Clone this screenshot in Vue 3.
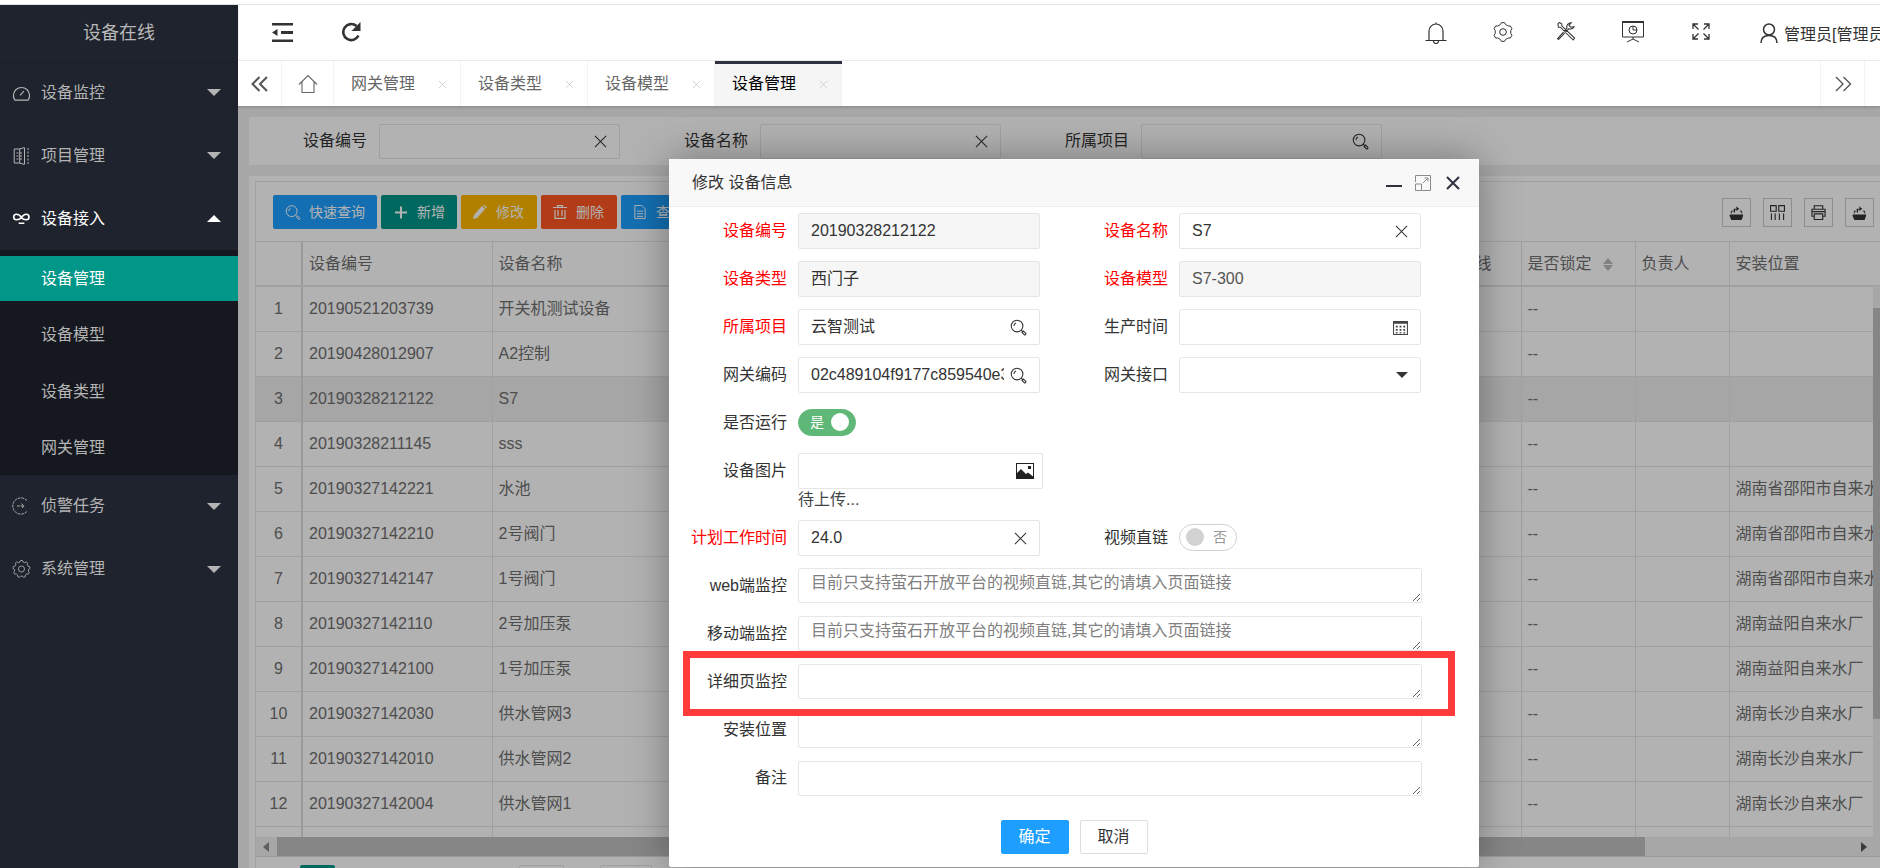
<template>
  <div class="app">
    <!-- icon sprite -->
    <svg class="defs" aria-hidden="true">
      <symbol id="i-search" viewBox="0 0 24 24"><g fill="none" stroke="currentColor" stroke-width="1.5"><circle cx="10" cy="10" r="8.2"/><path d="M5.500 10a4.500 4.500 0 0 1 3-4.200M15.800 15.800l1.700 1.700M17 19l2-2 3 3a1.400 1.400 0 0 1-2 2z"/></g></symbol>
      <symbol id="i-close" viewBox="0 0 14 14"><path d="M1 1l12 12M13 1L1 13" fill="none" stroke="currentColor" stroke-width="1.1"/></symbol>
      <symbol id="i-shut" viewBox="0 0 14 14"><path d="M1 1l12 12M13 1L1 13" fill="none" stroke="currentColor" stroke-width="2"/></symbol>
      <symbol id="i-home" viewBox="0 0 20 20"><path d="M1 10.500L10 1.500l9 9M4 8v10.500h12V8" fill="none" stroke="currentColor" stroke-width="1.100"/></symbol>
      <symbol id="i-left" viewBox="0 0 18 16"><path d="M8.500 1L1.500 8l7 7M16 1L9 8l7 7" fill="none" stroke="currentColor" stroke-width="2"/></symbol>
      <symbol id="i-right" viewBox="0 0 18 16"><path d="M2 1l7 7-7 7M9.500 1l7 7-7 7" fill="none" stroke="currentColor" stroke-width="1.400"/></symbol>
      <symbol id="i-outdent" viewBox="0 0 21 19"><path fill="currentColor" d="M0 0h21v2.500H0zM0 16.500h21V19H0zM9 8h12v3H9zM0 9.500l5.500-3.500v7z"/></symbol>
      <symbol id="i-refresh" viewBox="0 0 20 20"><path d="M17.500 13.500A8 8 0 1 1 15.500 4" fill="none" stroke="currentColor" stroke-width="2.600"/><path fill="currentColor" d="M19.500 0v9h-9z"/></symbol>
      <symbol id="i-bell" viewBox="0 0 22 22"><path d="M4 18V9a7 7 0 0 1 14 0v9M0.500 18.500h21M8.500 19a2.500 2.500 0 0 0 5 0M11 2V.500" fill="none" stroke="currentColor" stroke-width="1.200"/></symbol>
      <symbol id="i-gear6" viewBox="0 0 24 24"><path :d="gear(6, 12, 9.5)" fill="none" stroke="currentColor" stroke-width="1.200"/><circle cx="12" cy="12" r="4" fill="none" stroke="currentColor" stroke-width="1.200"/></symbol>
      <symbol id="i-gear" viewBox="0 0 24 24"><path :d="gear(9, 12, 9.500)" fill="none" stroke="currentColor" stroke-width="1.100"/><circle cx="12" cy="12" r="4" fill="none" stroke="currentColor" stroke-width="1.100"/></symbol>
      <symbol id="i-tools" viewBox="0 0 20 20"><path d="M1 2l1.500-1.500L5 2v2l13.500 13-1.500 2L3.500 5.500H1.500zM18 5a4.500 4.500 0 0 1-5.500 2L3 17l-1.500 1.500L.700 17.500 10.500 6.500A4.500 4.500 0 0 1 15 .700L12.500 3.500l2 2z" fill="none" stroke="currentColor" stroke-width="1.100"/></symbol>
      <symbol id="i-screen" viewBox="0 0 22 22"><path fill="currentColor" d="M0 0h22v2H0z"/><path d="M.500 1v15h21V1M11 16v2M5 21l6-3 6 3" fill="none" stroke="currentColor"/><circle cx="11" cy="9" r="4" fill="none" stroke="currentColor"/><path d="M11 5v4h4" fill="none" stroke="currentColor"/></symbol>
      <symbol id="i-expand" viewBox="0 0 18 17"><path d="M1 6V1h5M1 1l5.500 5.500M12 1h5v5M17 1l-5.500 5.500M1 11v5h5M1 16l5.500-5.500M12 16h5v-5M17 16l-5.500-5.500" fill="none" stroke="currentColor" stroke-width="1.300"/></symbol>
      <symbol id="i-user" viewBox="0 0 18 20"><path d="M1 20c0-5 3-7.500 8-7.500s8 2.500 8 7.500" fill="none" stroke="currentColor" stroke-width="1.500"/><circle cx="9" cy="6.500" r="5.500" fill="none" stroke="currentColor" stroke-width="1.500"/></symbol>
      <symbol id="i-gauge" viewBox="0 0 20 18"><path d="M3 16.500a8.500 8.500 0 1 1 14 0zM8.500 11.500L12.500 7" fill="none" stroke="currentColor" stroke-width="1.200"/></symbol>
      <symbol id="i-book" viewBox="0 0 16 18"><path d="M.700 2h5.500v14H.700zM6 2l5-1.500M6 16l5 1.500M11 1v16" fill="none" stroke="currentColor"/><path d="M14.500 1v16M3 6h6M3 9h6M3 12h6" fill="none" stroke="currentColor" stroke-dasharray="2 1.500"/></symbol>
      <symbol id="i-link" viewBox="-1 -3 20 18"><path d="M9 4.500C7.500 2 5.500 1 3.700 1a2.800 2.800 0 0 0 0 5.800C5.500 6.800 7.500 6 9 4.500c1.500-2.500 3-3.500 5-3.500a2.800 2.800 0 0 1 0 5.800C12 6.800 10 6 9 4.500zM6 10.500h6" fill="none" stroke="currentColor" stroke-width="1.700"/></symbol>
      <symbol id="i-task" viewBox="0 0 20 20"><path d="M16 4A9 9 0 1 0 16 16M5 10h8M10 7.500L13 10l-3 2.500" fill="none" stroke="currentColor" stroke-width="1.100" stroke-dasharray="3 1"/></symbol>
      <symbol id="i-plus" viewBox="0 0 12 12"><path fill="currentColor" d="M5 0h2v5h5v2H7v5H5V7H0V5h5z"/></symbol>
      <symbol id="i-pencil" viewBox="0 0 14 14"><path fill="currentColor" d="M0 14l1-4 8-9 3 3-8 9zM10 0l1-.5 3 3-1 1z"/></symbol>
      <symbol id="i-trash" viewBox="0 0 14 14"><path d="M0 2.500h14M4.500 2V.700h5V2M2 5v8.300h10V5M5 5v6M9 5v6" fill="none" stroke="currentColor" stroke-width="1.200"/></symbol>
      <symbol id="i-doc" viewBox="0 0 13 16"><path d="M.600.600h8l3.800 3.800v11H.600zM3 7h7M3 10h7M3 13h7" fill="none" stroke="currentColor" stroke-width="1.100"/></symbol>
      <symbol id="i-export" viewBox="0 0 16 16"><path fill="currentColor" d="M1 10h14v1.500L13.500 16h-11L.500 11.500zM7 1l4 3-3 2.500V5H6.500v3H5V4h3V3z"/><path d="M2.500 9V6.500h2M13.500 9V6.500h-2" fill="none" stroke="currentColor"/></symbol>
      <symbol id="i-cols" viewBox="0 0 16 16"><path d="M.600.600h6v6h-6zM9.400.600h6v6h-6zM1.500 9v7M5.500 9v7M10 9v7M14.500 9v7" fill="none" stroke="currentColor" stroke-width="1.200"/></symbol>
      <symbol id="i-print" viewBox="0 0 16 16"><path d="M3.500 4V.800h9V4M3.500 12H1V4.500h14V12h-2.500M3.500 9.500h9v6h-9zM1 7h14" fill="none" stroke="currentColor" stroke-width="1.200"/></symbol>
      <symbol id="i-date" viewBox="0 0 16 16"><path d="M.600 1.500h14.800v14H.600z" fill="none" stroke="currentColor" stroke-width="1.100"/><path fill="currentColor" d="M1 1h14v3H1zM3 6h2v2H3zM7 6h2v2H7zM11 6h2v2h-2zM3 9.500h2v2H3zM7 9.500h2v2H7zM11 9.500h2v2h-2zM3 13h2v1.500H3zM7 13h2v1.500H7zM11 13h2v1.500h-2z"/></symbol>
      <symbol id="i-image" viewBox="0 0 18 16"><path fill="currentColor" fill-rule="evenodd" d="M0 0h18v16H0zM1 1v9l4-4 5 5 2-1.500 5 4V1zM12 3h3v3h-3z"/></symbol>
      <symbol id="i-restore" viewBox="0 0 16 16"><path d="M.500 7V.500h15v15H7M9.500 3H13v3.500M13 3L8 8" fill="none" stroke="#8a8a8a" stroke-width="1"/><path d="M.500 9h6v6.500h-6z" fill="none" stroke="#8a8a8a" stroke-width="1"/></symbol>
    </svg>

    <div class="top-strip"></div>
    <div class="shell">
      <aside class="sidebar">
        <div class="logo">设备在线</div>
        <template v-for="m in menus" :key="m.label">
          <div class="menu-item" :class="{ open: m.children }">
            <svg class="menu-ico"><use :href="'#' + m.icon" /></svg>
            <span>{{ m.label }}</span>
            <i class="caret" :class="{ up: m.children }"></i>
          </div>
          <div v-if="m.children" class="submenu">
            <div v-for="(c, i) in m.children" :key="c" class="sub-item" :class="{ active: i === 0 }">{{ c }}</div>
          </div>
        </template>
      </aside>

      <div class="right">
        <header class="header">
          <svg class="h-outdent"><use href="#i-outdent" /></svg>
          <svg class="h-refresh"><use href="#i-refresh" /></svg>
          <div class="header-tools">
            <svg class="h-bell"><use href="#i-bell" /></svg>
            <svg class="h-gear"><use href="#i-gear6" /></svg>
            <svg class="h-tool"><use href="#i-tools" /></svg>
            <svg class="h-screen"><use href="#i-screen" /></svg>
            <svg class="h-expand"><use href="#i-expand" /></svg>
            <svg class="h-user"><use href="#i-user" /></svg>
            <span class="user-name">管理员[管理员]</span>
          </div>
        </header>

        <nav class="tabs">
          <div class="tab-arrow"><svg class="arrow-ico"><use href="#i-left" /></svg></div>
          <div class="tab-home"><svg class="home-ico"><use href="#i-home" /></svg></div>
          <div v-for="t in tabs" :key="t" class="tab" :class="{ current: t === '设备管理' }">
            <span>{{ t }}</span>
            <svg class="tab-x"><use href="#i-close" /></svg>
          </div>
          <div class="tab-arrow tab-next"><svg class="arrow-ico thin"><use href="#i-right" /></svg></div>
        </nav>

        <main class="main">
          <section class="search-card">
            <div class="search-field">
              <label>设备编号</label>
              <div class="search-input"><svg class="x-ico"><use href="#i-close" /></svg></div>
            </div>
            <div class="search-field">
              <label>设备名称</label>
              <div class="search-input"><svg class="x-ico"><use href="#i-close" /></svg></div>
            </div>
            <div class="search-field">
              <label>所属项目</label>
              <div class="search-input"><svg class="s-ico"><use href="#i-search" /></svg></div>
            </div>
          </section>

          <section class="table-card">
            <div class="panel">
              <div class="toolbar">
                <div class="btn-group">
                  <button class="btn blue"><svg class="b-search"><use href="#i-search" /></svg>快速查询</button>
                  <button class="btn teal"><svg class="b-plus"><use href="#i-plus" /></svg>新增</button>
                  <button class="btn amber"><svg class="b-small"><use href="#i-pencil" /></svg>修改</button>
                  <button class="btn red"><svg class="b-small"><use href="#i-trash" /></svg>删除</button>
                  <button class="btn blue"><svg class="b-small"><use href="#i-doc" /></svg>查看</button>
                </div>
                <div class="tool-group">
                  <div class="tool"><svg><use href="#i-export" /></svg></div>
                  <div class="tool"><svg><use href="#i-cols" /></svg></div>
                  <div class="tool"><svg><use href="#i-print" /></svg></div>
                  <div class="tool"><svg><use href="#i-export" /></svg></div>
                </div>
              </div>

              <div class="table-wrap">
                <table class="grid">
                  <colgroup>
                    <col v-for="(w, i) in colWidths" :key="i" :style="{ width: w + 'px' }" />
                  </colgroup>
                  <thead>
                    <tr>
                      <th></th>
                      <th v-for="h in heads" :key="h">
                        {{ h }}
                        <span v-if="h === '是否锁定'" class="sort"><i></i><i></i></span>
                      </th>
                    </tr>
                  </thead>
                  <tbody>
                    <tr v-for="(r, i) in rows" :key="i" :class="{ selected: r.no === 3 }">
                      <td class="no">{{ r.no }}</td>
                      <td>{{ r.code }}</td>
                      <td>{{ r.name }}</td>
                      <td></td><td></td><td></td><td></td><td></td>
                      <td>{{ r.no ? '--' : '' }}</td>
                      <td></td>
                      <td>{{ r.place }}</td>
                    </tr>
                  </tbody>
                </table>
                <div class="v-scroll"><div class="v-thumb"></div></div>
              </div>

              <div class="h-scroll">
                <div class="h-arrow"><i class="tri-left"></i></div>
                <div class="h-thumb"></div>
                <div class="h-rest"><i class="tri-right"></i></div>
              </div>

              <div class="pager">
                <div class="page-cur"></div>
                <div class="page-box first"></div>
                <div class="page-box second"></div>
              </div>
            </div>
          </section>

          <div class="shade"></div>

          <div class="modal">
            <div class="modal-head">
              <span>修改 设备信息</span>
              <div class="modal-actions">
                <i class="min"></i>
                <svg class="restore"><use href="#i-restore" /></svg>
                <svg class="shut"><use href="#i-shut" /></svg>
              </div>
            </div>

            <div class="modal-body">
              <div class="row">
                <div class="field">
                  <label class="req">设备编号</label>
                  <div class="inp off"><span>20190328212122</span></div>
                </div>
                <div class="field">
                  <label class="req">设备名称</label>
                  <div class="inp"><span>S7</span><svg class="x-ico"><use href="#i-close" /></svg></div>
                </div>
              </div>
              <div class="row">
                <div class="field">
                  <label class="req">设备类型</label>
                  <div class="inp off"><span>西门子</span></div>
                </div>
                <div class="field">
                  <label class="req">设备模型</label>
                  <div class="inp off muted"><span>S7-300</span></div>
                </div>
              </div>
              <div class="row">
                <div class="field">
                  <label class="req">所属项目</label>
                  <div class="inp"><span>云智测试</span><svg class="s-ico"><use href="#i-search" /></svg></div>
                </div>
                <div class="field">
                  <label>生产时间</label>
                  <div class="inp"><span></span><svg class="d-ico"><use href="#i-date" /></svg></div>
                </div>
              </div>
              <div class="row">
                <div class="field">
                  <label>网关编码</label>
                  <div class="inp"><span>02c489104f9177c859540e3a</span><svg class="s-ico"><use href="#i-search" /></svg></div>
                </div>
                <div class="field">
                  <label>网关接口</label>
                  <div class="inp"><span></span><i class="select-tri"></i></div>
                </div>
              </div>
              <div class="row">
                <div class="field">
                  <label>是否运行</label>
                  <div class="switch on"><em>是</em><i></i></div>
                </div>
              </div>
              <div class="row tight">
                <div class="field">
                  <label>设备图片</label>
                  <div class="inp wide"><span></span><svg class="i-ico"><use href="#i-image" /></svg></div>
                </div>
              </div>
              <div class="hint">待上传...</div>
              <div class="row">
                <div class="field">
                  <label class="req">计划工作时间</label>
                  <div class="inp"><span>24.0</span><svg class="x-ico"><use href="#i-close" /></svg></div>
                </div>
                <div class="field">
                  <label>视频直链</label>
                  <div class="switch"><i></i><em>否</em></div>
                </div>
              </div>
              <div v-for="a in areas" :key="a.label" class="row area">
                <div class="field">
                  <label>{{ a.label }}</label>
                  <textarea :placeholder="a.placeholder"></textarea>
                </div>
              </div>
            </div>

            <div class="modal-foot">
              <button class="ok">确定</button>
              <button class="cancel">取消</button>
            </div>

            <!-- annotation drawn on the screenshot -->
            <div class="mark"></div>
          </div>
        </main>
      </div>
    </div>
  </div>
</template>

<script setup>
const tip = '目前只支持萤石开放平台的视频直链,其它的请填入页面链接'

const menus = [
  { label: '设备监控', icon: 'i-gauge' },
  { label: '项目管理', icon: 'i-book' },
  { label: '设备接入', icon: 'i-link', children: ['设备管理', '设备模型', '设备类型', '网关管理'] },
  { label: '侦警任务', icon: 'i-task' },
  { label: '系统管理', icon: 'i-gear' }
]

const tabs = ['网关管理', '设备类型', '设备模型', '设备管理']

const colWidths = [46, 190, 180, 180, 180, 200, 189, 100, 114, 94, 151]
const heads = ['设备编号', '设备名称', '设备类型', '设备模型', '所属项目', '生产时间', '是否在线', '是否锁定', '负责人', '安装位置']

const rows = [
  { no: 1, code: '20190521203739', name: '开关机测试设备', place: '' },
  { no: 2, code: '20190428012907', name: 'A2控制', place: '' },
  { no: 3, code: '20190328212122', name: 'S7', place: '' },
  { no: 4, code: '20190328211145', name: 'sss', place: '' },
  { no: 5, code: '20190327142221', name: '水池', place: '湖南省邵阳市自来水厂' },
  { no: 6, code: '20190327142210', name: '2号阀门', place: '湖南省邵阳市自来水厂' },
  { no: 7, code: '20190327142147', name: '1号阀门', place: '湖南省邵阳市自来水厂' },
  { no: 8, code: '20190327142110', name: '2号加压泵', place: '湖南益阳自来水厂' },
  { no: 9, code: '20190327142100', name: '1号加压泵', place: '湖南益阳自来水厂' },
  { no: 10, code: '20190327142030', name: '供水管网3', place: '湖南长沙自来水厂' },
  { no: 11, code: '20190327142010', name: '供水管网2', place: '湖南长沙自来水厂' },
  { no: 12, code: '20190327142004', name: '供水管网1', place: '湖南长沙自来水厂' },
  { no: '', code: '', name: '', place: '' }
]

const areas = [
  { label: 'web端监控', placeholder: tip },
  { label: '移动端监控', placeholder: tip },
  { label: '详细页监控', placeholder: '' },
  { label: '安装位置', placeholder: '' },
  { label: '备注', placeholder: '' }
]

// outline of a cog wheel, centred on 12,12
function gear(teeth, outer, inner) {
  const step = (Math.PI * 2) / teeth
  let d = ''
  for (let i = 0; i < teeth; i++) {
    const a = i * step
    const pts = [
      [inner, a - step * 0.32],
      [outer - 0.6, a - step * 0.16],
      [outer - 0.6, a + step * 0.16],
      [inner, a + step * 0.32]
    ]
    pts.forEach(([r, t], j) => {
      const x = (12 + r * Math.sin(t)).toFixed(2)
      const y = (12 - r * Math.cos(t)).toFixed(2)
      d += (i === 0 && j === 0 ? 'M' : 'L') + x + ' ' + y
    })
  }
  return d + 'Z'
}
</script>

<style scoped>
.app {
  width: 1880px;
  height: 868px;
  overflow: hidden;
  display: flex;
  flex-direction: column;
  background: #fff;
  font: 16px/20px "Liberation Sans", "Noto Sans CJK SC", sans-serif;
  color: #333;
}
.defs {
  position: absolute;
  width: 0;
  height: 0;
}
.top-strip {
  height: 4px;
  flex: none;
  border-bottom: 1px solid #e2e2e2;
  box-sizing: content-box;
}
.shell {
  flex: 1;
  display: flex;
  min-height: 0;
}

/* 左侧菜单 */
.sidebar {
  width: 238px;
  flex: none;
  background: #1f232d;
  color: #b8b8b8;
}
.logo {
  height: 56px;
  line-height: 56px;
  text-align: center;
  font-size: 18px;
  box-shadow: 0 1px 2px rgba(0, 0, 0, 0.15);
}
.menu-item {
  height: 63px;
  display: flex;
  align-items: center;
  padding-left: 12px;
  position: relative;
  color: #b4b4b4;
}
.menu-item.open {
  color: #fff;
}
.menu-ico {
  width: 19px;
  height: 18px;
  margin-right: 10px;
  flex: none;
}
.caret {
  margin-left: auto;
  margin-right: 17px;
  width: 0;
  height: 0;
  border-left: 7px solid transparent;
  border-right: 7px solid transparent;
  border-top: 7px solid #b4b4b4;
}
.caret.up {
  border-top: 0;
  border-bottom: 7px solid #fff;
}
.submenu {
  background: #16181f;
  padding: 6px 0 5px;
}
.sub-item {
  height: 45px;
  line-height: 45px;
  padding-left: 41px;
  margin-bottom: 11.3px;
  color: #b4b4b4;
}
.sub-item:last-child {
  margin-bottom: 0;
}
.sub-item.active {
  background: #009688;
  color: #fff;
}

/* 顶栏 */
.right {
  flex: 1;
  min-width: 0;
  display: flex;
  flex-direction: column;
}
.header {
  height: 55px;
  flex: none;
  display: flex;
  align-items: center;
  border-bottom: 1px solid #f2f2f2;
  box-sizing: content-box;
  color: #333;
}
.h-outdent {
  width: 21px;
  height: 19px;
  margin-left: 34px;
  margin-top: -1px;
}
.h-refresh {
  width: 20px;
  height: 20px;
  margin-left: 48px;
  margin-top: -1px;
}
.header-tools {
  margin-left: auto;
  width: 455px;
  flex: none;
  display: flex;
  align-items: center;
  overflow: hidden;
  white-space: nowrap;
}
.header-tools svg {
  flex: none;
}
.h-bell {
  width: 22px;
  height: 22px;
}
.h-gear {
  width: 20px;
  height: 20px;
  margin-left: 46px;
  margin-top: -2px;
}
.h-tool {
  width: 19px;
  height: 19px;
  margin-left: 44px;
  margin-top: -2px;
}
.h-screen {
  width: 22px;
  height: 22px;
  margin-left: 46px;
  margin-top: -2px;
}
.h-expand {
  width: 18px;
  height: 17px;
  margin-left: 48px;
  margin-top: -3px;
}
.h-user {
  width: 18px;
  height: 20px;
  margin-left: 50px;
}
.user-name {
  margin-left: 6px;
  margin-top: 5px;
}

/* 标签页 */
.tabs {
  height: 45px;
  flex: none;
  display: flex;
  position: relative;
  z-index: 2;
  box-shadow: 0 1px 3px rgba(0, 0, 0, 0.2);
  background: #fff;
}
.tab-arrow {
  width: 44px;
  box-sizing: border-box;
  display: flex;
  align-items: center;
  justify-content: center;
  border-right: 1px solid #f2f2f2;
  color: #555;
}
.tab-next {
  position: absolute;
  right: 15px;
  top: 0;
  bottom: 0;
  width: 45px;
  border-left: 1px solid #f2f2f2;
  border-right: 1px solid #f2f2f2;
}
.arrow-ico {
  width: 18px;
  height: 16px;
}
.home-ico {
  width: 20px;
  height: 20px;
}
.tab-home {
  width: 52px;
  box-sizing: border-box;
  display: flex;
  align-items: center;
  justify-content: center;
  border-right: 1px solid #f2f2f2;
  color: #666;
}
.tab {
  width: 127px;
  box-sizing: border-box;
  display: flex;
  align-items: center;
  padding-left: 17px;
  border-right: 1px solid #f2f2f2;
  color: #666;
}
.tab-x {
  width: 9px;
  height: 9px;
  margin-left: 23px;
  margin-top: 2px;
  color: #c4c4c4;
}
.tab.current {
  background: #f5f5f5;
  color: #000;
  border-top: 3px solid #2f3040;
  border-right: 0;
  padding-bottom: 3px;
}

/* 主体 */
.main {
  flex: 1;
  min-height: 0;
  position: relative;
  background: #f0f0f0;
  padding: 11px 0 0 11px;
  overflow: hidden;
}
.search-card {
  height: 48px;
  margin-bottom: 11px;
  background: #fff;
  display: flex;
  align-items: center;
  padding-top: 0;
}
.search-field {
  display: flex;
  align-items: center;
  margin-right: 10px;
}
.search-field label {
  width: 118px;
  text-align: right;
  margin-right: 12px;
}
.search-input {
  width: 241px;
  height: 35px;
  box-sizing: border-box;
  border: 1px solid #e6e6e6;
  border-radius: 2px;
  display: flex;
  align-items: center;
  justify-content: flex-end;
  padding-right: 12px;
  color: #333;
}
.x-ico {
  width: 13px;
  height: 13px;
  color: #333;
  flex: none;
}
.s-ico {
  width: 17px;
  height: 17px;
  color: #333;
  flex: none;
}

/* 表格区 */
.table-card {
  background: #fff;
  padding: 5px 0 0 6px;
  height: 700px;
}
.panel {
  border: 1px solid #e6e6e6;
  border-right: 0;
  border-bottom: 0;
}
.toolbar {
  height: 59px;
  box-sizing: border-box;
  display: flex;
  align-items: center;
  justify-content: space-between;
  padding: 1px 6px 0 17px;
}
.btn-group {
  display: flex;
  gap: 4px;
}
.btn {
  height: 34px;
  border: 0;
  border-radius: 2px;
  color: #fff;
  font: inherit;
  font-size: 14px;
  display: flex;
  align-items: center;
  padding: 0 12px;
  white-space: nowrap;
}
.btn.blue { background: #1e9fff; }
.btn.teal { background: #009688; }
.btn.amber { background: #ffb800; }
.btn.red { background: #ff5722; }
.btn:first-child { width: 104px; }
.teal { width: 76px; }
.amber, .red { width: 76px; }
.b-search {
  width: 17px;
  height: 17px;
  margin-right: 8px;
}
.b-plus {
  width: 13px;
  height: 13px;
  margin-right: 10px;
  margin-left: 2px;
}
.b-small {
  width: 14px;
  height: 14px;
  margin-right: 9px;
}
.tool-group {
  display: flex;
  gap: 12px;
}
.tool {
  width: 29px;
  height: 29px;
  box-sizing: border-box;
  border: 1px solid #ccc;
  display: flex;
  align-items: center;
  justify-content: center;
  color: #333;
}
.tool svg {
  width: 15px;
  height: 15px;
}

.table-wrap {
  position: relative;
  height: 595px;
  overflow: hidden;
  border-top: 1px solid #e6e6e6;
}
.grid {
  table-layout: fixed;
  border-collapse: collapse;
  width: 1624px;
  color: #707070;
}
.grid th {
  height: 43px;
  padding: 0 6px;
  font-weight: 400;
  text-align: left;
  white-space: nowrap;
  border-right: 1px solid #e6e6e6;
  border-bottom: 2px solid #e6e6e6;
}
.grid td {
  height: 44px;
  padding: 0 6px;
  white-space: nowrap;
  overflow: hidden;
  border-right: 1px solid #e6e6e6;
  border-bottom: 1px solid #e6e6e6;
}
.grid td.no {
  text-align: center;
  padding: 0;
}
.grid th:first-child,
.grid td:first-child {
  border-right: 2px solid #dcdcdc;
}
.selected td {
  background: #eee;
}
.sort {
  display: inline-block;
  vertical-align: middle;
  margin-left: 7px;
}
.sort i {
  display: block;
  width: 0;
  height: 0;
  border-left: 5px solid transparent;
  border-right: 5px solid transparent;
}
.sort i:first-child {
  border-bottom: 6px solid #bbb;
  margin-bottom: 1px;
}
.sort i:last-child {
  border-top: 6px solid #bbb;
}
.v-scroll {
  position: absolute;
  right: 0;
  top: 44px;
  bottom: 0;
  width: 7px;
  background: #f0f0f0;
}
.v-thumb {
  margin-top: 22px;
  height: 411px;
  background: #c0c0c0;
}
.h-scroll {
  height: 19px;
  display: flex;
  background: #f0f0f0;
  border-bottom: 1px solid #e0e0e0;
  box-sizing: content-box;
}
.h-arrow {
  width: 21px;
  flex: none;
  display: flex;
  align-items: center;
  padding-left: 7px;
  box-sizing: border-box;
}
.h-thumb {
  width: 1368px;
  flex: none;
  background: #c0c0c0;
}
.h-rest {
  flex: 1;
  display: flex;
  align-items: center;
  justify-content: flex-end;
  padding-right: 13px;
}
.tri-left,
.tri-right {
  width: 0;
  height: 0;
  border-top: 5px solid transparent;
  border-bottom: 5px solid transparent;
}
.tri-left { border-right: 6px solid #888; }
.tri-right { border-left: 6px solid #555; }
.pager {
  display: flex;
  padding: 8px 0 0 44px;
}
.page-cur {
  width: 35px;
  height: 30px;
  background: #009688;
  border-radius: 2px;
}
.page-box {
  height: 30px;
  box-sizing: border-box;
  border: 1px solid #e6e6e6;
  border-radius: 2px;
}
.page-box.first {
  width: 45px;
  margin-left: 184px;
}
.page-box.second {
  width: 52px;
  margin-left: 36px;
}

/* 遮罩和弹窗 */
.shade {
  position: absolute;
  inset: 0;
  background: rgba(0, 0, 0, 0.3);
}
.modal {
  position: absolute;
  left: 431px;
  top: 53px;
  width: 810px;
  height: 708px;
  background: #fff;
  border-radius: 2px;
  box-shadow: 0 0 40px rgba(0, 0, 0, 0.35);
  color: #333;
}
.modal-head {
  height: 48px;
  box-sizing: border-box;
  background: #f8f8f8;
  border-bottom: 1px solid #eee;
  display: flex;
  align-items: center;
  justify-content: space-between;
  padding: 0 19px 0 23px;
}
.modal-actions {
  display: flex;
  align-items: center;
  color: #2f3040;
}
.min {
  display: block;
  width: 16px;
  height: 2px;
  background: #2f3040;
  margin-top: 6px;
}
.restore {
  width: 16px;
  height: 16px;
  margin-left: 13px;
}
.shut {
  width: 14px;
  height: 14px;
  margin-left: 15px;
}
.modal-body {
  padding-top: 6px;
}
.row {
  display: flex;
  height: 36px;
  margin-bottom: 12px;
}
.row.tight {
  margin-bottom: 0;
}
.row.area {
  height: 35px;
  margin-bottom: 13.2px;
}
.field {
  display: flex;
  align-items: center;
}
.field + .field {
  margin-left: 10px;
}
.field label {
  width: 118px;
  margin-right: 11px;
  text-align: right;
  white-space: nowrap;
}
.field label.req {
  color: #f00;
}
.inp {
  width: 242px;
  height: 36px;
  box-sizing: border-box;
  border: 1px solid #e6e6e6;
  border-radius: 2px;
  display: flex;
  align-items: center;
  padding: 0 12px;
  color: #333;
  gap: 6px;
}
.inp span {
  flex: 1;
  min-width: 0;
  overflow: hidden;
  white-space: nowrap;
}
.inp.off {
  background: #f6f6f6;
}
.inp.muted {
  color: #555;
}
.inp.wide {
  width: 245px;
  padding-right: 8px;
}
.d-ico {
  width: 15px;
  height: 15px;
  color: #444;
  flex: none;
}
.i-ico {
  width: 18px;
  height: 16px;
  color: #222;
  flex: none;
}
.select-tri {
  border-left: 6px solid transparent;
  border-right: 6px solid transparent;
  border-top: 6px solid #333;
}
.switch {
  width: 58px;
  height: 27px;
  box-sizing: border-box;
  border: 1px solid #d2d2d2;
  border-radius: 14px;
  display: flex;
  align-items: center;
  justify-content: space-between;
  padding: 0 6px;
  margin-top: -2px;
}
.switch i {
  width: 18px;
  height: 18px;
  border-radius: 50%;
  background: #d2d2d2;
}
.switch em {
  font-style: normal;
  font-size: 14px;
  color: #999;
  margin-right: 3px;
}
.switch.on {
  background: #5fb878;
  border-color: #5fb878;
}
.switch.on i {
  background: #fff;
}
.switch.on em {
  color: #fff;
  margin: 0 0 0 5px;
}
.hint {
  height: 22px;
  line-height: 22px;
  margin: 0 0 9px 129px;
  color: #444;
}
textarea {
  width: 624px;
  height: 35px;
  box-sizing: border-box;
  padding: 4px 12px;
  border: 1px solid #e6e6e6;
  border-radius: 2px;
  font: inherit;
  color: #333;
  outline: 0;
  resize: both;
}
textarea::placeholder {
  color: #808080;
}
.modal-foot {
  display: flex;
  justify-content: center;
  gap: 11px;
  margin-top: 24px;
}
.modal-foot button {
  width: 68px;
  height: 34px;
  border-radius: 2px;
  font: inherit;
}
.ok {
  background: #1e9fff;
  border: 0;
  color: #fff;
}
.cancel {
  background: #fff;
  border: 1px solid #dedede;
  color: #333;
}
.mark {
  position: absolute;
  left: 14px;
  top: 492px;
  width: 772px;
  height: 65px;
  box-sizing: border-box;
  border: 7px solid #ff3b3b;
  pointer-events: none;
}
</style>
